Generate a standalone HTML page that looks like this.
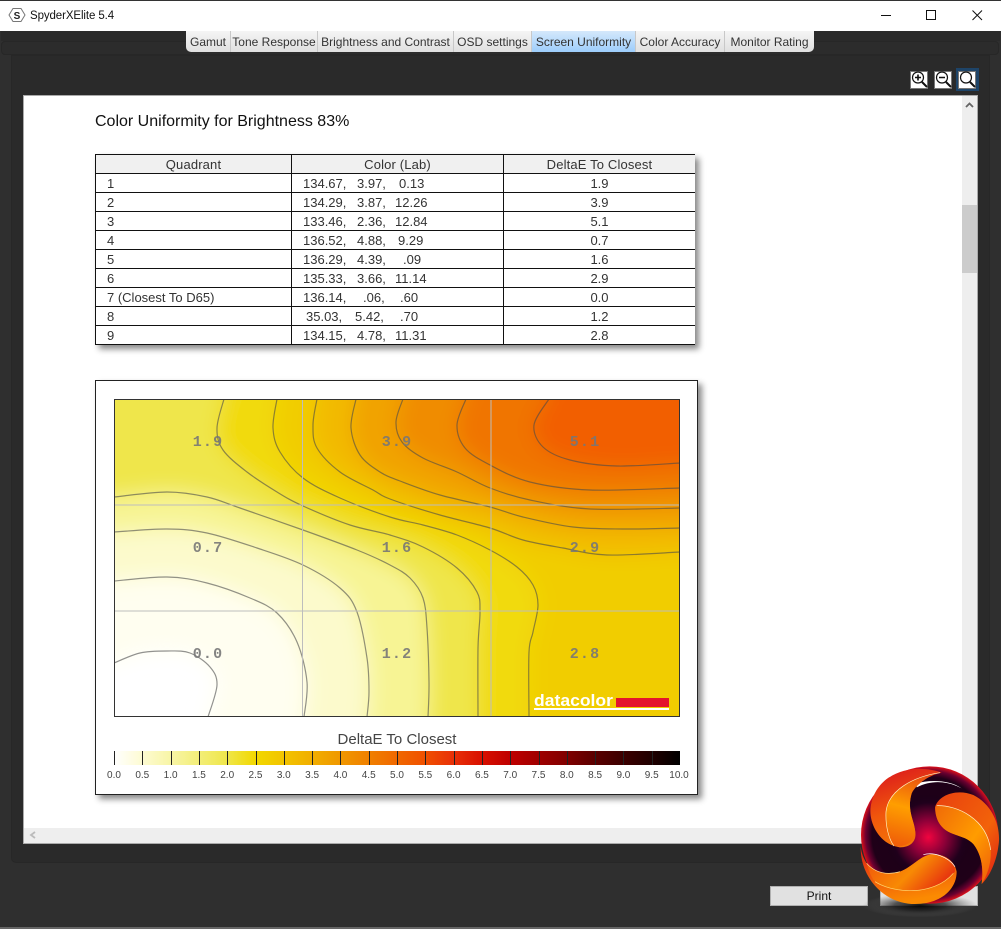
<!DOCTYPE html>
<html><head><meta charset="utf-8"><style>
html,body{margin:0;padding:0;background:#2f2f2f}
#p{position:relative;width:1001px;height:929px;overflow:hidden;background:#2f2f2f;font-family:"Liberation Sans",sans-serif;color:#222}
#p div,#p span{position:absolute;white-space:nowrap}
.tab{top:31px;height:21px;line-height:22px;text-align:center;font-size:12px;color:#333;background:linear-gradient(#f5f5f5,#e0e0e0);border-right:1px solid #c8c8c8;box-sizing:border-box}
.row{left:95px;width:600px;height:19px;border-bottom:1px solid #111;box-sizing:border-box;font-size:13px;line-height:19px;color:#333}
.row span{top:0}
.c{text-align:center}
.h{top:155px;font-size:13px;line-height:19px;color:#333;letter-spacing:.15px}
.btn{top:886px;width:98px;height:20px;background:#e1e1e1;border:1px solid #b0b0b0;box-sizing:border-box;text-align:center;font-size:12px;line-height:19px;color:#111}
</style></head><body><div id="p">
<div style="left:0;top:0;width:1001px;height:31px;background:#fff;border-top:1px solid #333;box-sizing:border-box"></div>
<svg style="position:absolute;left:8px;top:7px" width="18" height="16" viewBox="0 0 18 16"><path d="M5 1.500H13L17 8L13 14.500H5L1 8Z" fill="#fff" stroke="#777" stroke-width="1"/><text x="9" y="12" font-family="Liberation Sans" font-weight="bold" font-size="10" text-anchor="middle" fill="#222">S</text></svg>
<div style="left:30px;top:8px;font-size:11.500px;line-height:16px;color:#111;letter-spacing:-.1px">SpyderXElite 5.4</div>
<svg style="position:absolute;left:870px;top:0" width="125" height="31" viewBox="0 0 125 31"><path d="M11 15.500H21" stroke="#111"/><rect x="56.500" y="10.500" width="9" height="9" fill="none" stroke="#111"/><path d="M102.500 10.500L112 20M112 10.500L102.500 20" stroke="#111" fill="none"/></svg>

<div style="left:1px;top:31px;width:999px;height:10px;background:#2a2a2a"></div>
<div style="left:1px;top:41px;width:998px;height:14px;background:#2c2c2c;border-radius:4px;border:1px solid #272727;box-sizing:border-box"></div>
<div style="left:11px;top:55px;width:979px;height:808px;background:#2a2a2a;border:1px solid #272727;border-radius:0 0 5px 5px;box-sizing:border-box"></div>

<div class="tab" style="left:186px;width:45px;border-radius:0 0 0 5px">Gamut</div>
<div class="tab" style="left:231px;width:87px">Tone Response</div>
<div class="tab" style="left:318px;width:136px">Brightness and Contrast</div>
<div class="tab" style="left:454px;width:78px">OSD settings</div>
<div class="tab" style="left:532px;width:104px;background:linear-gradient(#d4e8fb,#9dcdfb)">Screen Uniformity</div>
<div class="tab" style="left:636px;width:89px">Color Accuracy</div>
<div class="tab" style="left:725px;width:89px;border-radius:0 0 5px 0;border-right:0">Monitor Rating</div>

<div style="left:910px;top:71px;width:18px;height:18px;background:#fff;border:1px solid #777;box-sizing:border-box"></div>
<div style="left:934px;top:71px;width:18px;height:18px;background:#fff;border:1px solid #777;box-sizing:border-box"></div>
<div style="left:956px;top:68px;width:23px;height:23px;background:#1e4468;box-sizing:border-box"></div>
<div style="left:958px;top:71px;width:18px;height:18px;background:#fff;border:1px solid #777;box-sizing:border-box"></div>
<svg style="position:absolute;left:905px;top:62px" width="76" height="34" viewBox="0 0 76 34" fill="none" stroke="#111"><g stroke-width="1.200"><circle cx="13" cy="15.500" r="5.500"/><circle cx="37" cy="15.500" r="5.500"/><circle cx="61" cy="15.500" r="5.500"/></g><path d="M17 20L22 25M41 20L46 25M65 20L70 25" stroke-width="2"/><path d="M10 15.500H16M13 12.500V18.500M34 15.500H40" stroke-width="1.600"/></svg>

<div style="left:23px;top:95px;width:955px;height:749px;background:#fff;border:1px solid #aaa;box-sizing:border-box"></div>
<div style="left:962px;top:96px;width:15px;height:747px;background:#eee"></div>
<div style="left:962px;top:205px;width:15px;height:68px;background:#ccc"></div>
<div style="left:24px;top:828px;width:953px;height:15px;background:#eee"></div>
<svg style="position:absolute;left:0;top:0" width="1001" height="929" viewBox="0 0 1001 929" fill="none"><path d="M966 107L969.500 103.500L973 107" stroke="#666" stroke-width="1.800"/><path d="M35 832L31 835L35 838" stroke="#bbb" stroke-width="1.800"/></svg>

<div style="left:95px;top:112px;font-size:16px;line-height:19px;color:#111">Color Uniformity for Brightness 83%</div>

<div style="left:95px;top:154px;width:600px;height:191px;background:#fff;box-shadow:4px 4px 6px #888"></div>
<div style="left:95px;top:154px;width:600px;height:20px;background:#f0f0f0;border-top:1px solid #111;border-bottom:1px solid #111;box-sizing:border-box"></div>
<div class="c h" style="left:96px;width:195px">Quadrant</div>
<div class="c h" style="left:292px;width:211px">Color (Lab)</div>
<div class="c h" style="left:504px;width:191px">DeltaE To Closest</div>

<div class="row" style="top:174px"><span style="left:12px">1</span><span style="left:208px">134.67,</span><span style="left:262px">3.97,</span><span style="left:304px">0.13</span><span class="c" style="left:409px;width:191px">1.9</span></div>
<div class="row" style="top:193px"><span style="left:12px">2</span><span style="left:208px">134.29,</span><span style="left:262px">3.87,</span><span style="left:300px">12.26</span><span class="c" style="left:409px;width:191px">3.9</span></div>
<div class="row" style="top:212px"><span style="left:12px">3</span><span style="left:208px">133.46,</span><span style="left:262px">2.36,</span><span style="left:300px">12.84</span><span class="c" style="left:409px;width:191px">5.1</span></div>
<div class="row" style="top:231px"><span style="left:12px">4</span><span style="left:208px">136.52,</span><span style="left:262px">4.88,</span><span style="left:303px">9.29</span><span class="c" style="left:409px;width:191px">0.7</span></div>
<div class="row" style="top:250px"><span style="left:12px">5</span><span style="left:208px">136.29,</span><span style="left:262px">4.39,</span><span style="left:308px">.09</span><span class="c" style="left:409px;width:191px">1.6</span></div>
<div class="row" style="top:269px"><span style="left:12px">6</span><span style="left:208px">135.33,</span><span style="left:262px">3.66,</span><span style="left:300px">11.14</span><span class="c" style="left:409px;width:191px">2.9</span></div>
<div class="row" style="top:288px"><span style="left:12px">7 (Closest To D65)</span><span style="left:208px">136.14,</span><span style="left:268px">.06,</span><span style="left:305px">.60</span><span class="c" style="left:409px;width:191px">0.0</span></div>
<div class="row" style="top:307px"><span style="left:12px">8</span><span style="left:211px">35.03,</span><span style="left:260px">5.42,</span><span style="left:305px">.70</span><span class="c" style="left:409px;width:191px">1.2</span></div>
<div class="row" style="top:326px"><span style="left:12px">9</span><span style="left:208px">134.15,</span><span style="left:262px">4.78,</span><span style="left:300px">11.31</span><span class="c" style="left:409px;width:191px">2.8</span></div>
<div style="left:95px;top:154px;width:1px;height:191px;background:#111"></div>
<div style="left:291px;top:154px;width:1px;height:191px;background:#111"></div>
<div style="left:503px;top:154px;width:1px;height:191px;background:#111"></div>

<div style="left:95px;top:380px;width:603px;height:415px;background:#fff;border:1px solid #222;box-sizing:border-box;box-shadow:4px 4px 6px #888"></div>

<svg id="chart" style="position:absolute;left:0;top:0" width="1001" height="929" viewBox="0 0 1001 929">
<defs>
<clipPath id="cp"><rect x="114" y="399" width="566" height="318"/></clipPath>
<filter id="bl" filterUnits="userSpaceOnUse" x="-100" y="200" width="1200" height="800"><feGaussianBlur stdDeviation="10"/></filter>
<linearGradient id="cb" x1="0" x2="1" y1="0" y2="0">
<stop offset="0" stop-color="#fff"/><stop offset=".05" stop-color="#fdfbd2"/><stop offset=".1" stop-color="#f8f5a6"/><stop offset=".15" stop-color="#f3ee78"/><stop offset=".2" stop-color="#efe64a"/><stop offset=".25" stop-color="#f2d800"/><stop offset=".3" stop-color="#f2c400"/><stop offset=".35" stop-color="#f1ae00"/><stop offset=".4" stop-color="#f09800"/><stop offset=".45" stop-color="#f08000"/><stop offset=".5" stop-color="#f06800"/><stop offset=".55" stop-color="#f05000"/><stop offset=".6" stop-color="#e83008"/><stop offset=".65" stop-color="#d81000"/><stop offset=".7" stop-color="#bf0000"/><stop offset=".75" stop-color="#a00000"/><stop offset=".8" stop-color="#800000"/><stop offset=".85" stop-color="#5a0000"/><stop offset=".9" stop-color="#3c0000"/><stop offset=".95" stop-color="#200000"/><stop offset="1" stop-color="#000"/>
</linearGradient>
</defs>
<g clip-path="url(#cp)"><rect x="114" y="399" width="566" height="318" fill="#fff"/><g id="fills" filter="url(#bl)"></g><g id="lines" fill="none" stroke="#4a4a4a" stroke-opacity=".6" stroke-width="1.200"></g></g>
<path d="M302.500 399V717M491 399V717M114 505H680M114 611H680" stroke="#bdbdbd" stroke-width="1"/>
<rect x="114.500" y="399.500" width="565" height="317" fill="none" stroke="#333" stroke-width="1"/>
<g font-family="Liberation Mono" font-weight="bold" font-size="15" fill="#777" text-anchor="middle" letter-spacing="1.200" fill-opacity=".9">
<text x="208" y="446">1.9</text><text x="397" y="446">3.9</text><text x="585" y="446">5.1</text>
<text x="208" y="552">0.7</text><text x="397" y="552">1.6</text><text x="585" y="552">2.9</text>
<text x="208" y="658">0.0</text><text x="397" y="658">1.2</text><text x="585" y="658">2.8</text>
</g>
<text x="534" y="706" font-family="Liberation Sans" font-weight="bold" font-size="17" fill="#fff" textLength="79" lengthAdjust="spacingAndGlyphs">datacolor</text>
<rect x="616" y="698" width="53" height="9" fill="#e4132c"/><rect x="534" y="708" width="135" height="2" fill="#fff"/>
<text x="397" y="744" font-family="Liberation Sans" font-size="15" fill="#444" text-anchor="middle">DeltaE To Closest</text>
<rect x="114" y="751" width="566" height="14" fill="url(#cb)"/>
<g id="ticks" stroke="#222" stroke-width="1"></g>
<g id="tl" font-family="Liberation Sans" font-size="10" fill="#444" text-anchor="middle"></g>
</svg>

<div class="btn" style="left:770px">Print</div>
<div class="btn" style="left:880px">Close</div>
<div style="left:0;top:927px;width:1001px;height:2px;background:#666"></div>

<svg style="position:absolute;left:760px;top:750px" width="241" height="179" viewBox="0 0 723 537">
<defs>
<radialGradient id="sh"><stop offset="0" stop-color="#000" stop-opacity=".9"/><stop offset=".45" stop-color="#222" stop-opacity=".75"/><stop offset="1" stop-color="#666" stop-opacity="0"/></radialGradient>
<radialGradient id="base"><stop offset="0" stop-color="#1a0018"/><stop offset=".84" stop-color="#1f0018"/><stop offset=".93" stop-color="#6a0030"/><stop offset="1" stop-color="#dc101a"/></radialGradient>
<radialGradient id="core" gradientUnits="userSpaceOnUse" cx="505" cy="262" r="130"><stop offset="0" stop-color="#f0043f"/><stop offset=".4" stop-color="#8c0038"/><stop offset=".8" stop-color="#20001c"/><stop offset="1" stop-color="#1a0018" stop-opacity="0"/></radialGradient>
<linearGradient id="b1" x1=".3" y1="0" x2=".6" y2="1"><stop offset="0" stop-color="#dc1c1c"/><stop offset=".5" stop-color="#f0560c"/><stop offset="1" stop-color="#f47a08"/></linearGradient>
<linearGradient id="i1" x1=".6" y1="0" x2=".4" y2="1"><stop offset="0" stop-color="#e64a12"/><stop offset=".5" stop-color="#ff9e00"/><stop offset="1" stop-color="#f06008"/></linearGradient>
<linearGradient id="b2" x1="0" y1="0" x2="1" y2="1"><stop offset="0" stop-color="#e8400f"/><stop offset=".6" stop-color="#f2620a"/><stop offset="1" stop-color="#dc1c14"/></linearGradient>
<linearGradient id="i2" x1="0" y1="0" x2="1" y2="1"><stop offset="0" stop-color="#f06a08"/><stop offset=".55" stop-color="#ff9c00"/><stop offset="1" stop-color="#ee5a0a"/></linearGradient>
<linearGradient id="b3" x1="0" y1="0" x2=".3" y2="1"><stop offset="0" stop-color="#dc1c14"/><stop offset=".6" stop-color="#f0600a"/><stop offset="1" stop-color="#fb8a02"/></linearGradient>
<linearGradient id="i3" x1="0" y1="0" x2="1" y2=".4"><stop offset="0" stop-color="#f0500c"/><stop offset=".6" stop-color="#f88a04"/><stop offset="1" stop-color="#e8380e"/></linearGradient>
</defs>
<ellipse cx="480" cy="466" rx="172" ry="36" fill="url(#sh)"/>
<circle cx="509" cy="255" r="206" fill="url(#base)"/>
<circle cx="505" cy="262" r="130" fill="url(#core)"/>
<path d="M470 100C510 88 570 90 605 115L590 108C550 92 510 92 470 112Z" fill="#fff"/>
<path d="M545 68C470 40 350 60 332 170C325 220 360 285 420 292C455 292 472 270 465 240C462 210 440 180 455 130C470 100 510 75 545 68Z" fill="url(#b1)"/>
<path d="M540 68C460 80 385 120 378 185C376 225 385 265 402 288C440 294 470 270 465 240C462 210 440 180 455 130C470 100 510 75 540 68Z" fill="url(#i1)"/>
<path d="M540 68C460 80 385 120 378 185C376 225 385 265 402 288" fill="none" stroke="#fff2c0" stroke-width="2"/>
<path d="M525 172C535 135 590 115 640 135C700 165 725 235 715 290C710 330 690 380 665 402C672 350 662 310 640 282C610 250 560 262 535 215C528 200 525 185 525 172Z" fill="url(#b2)"/>
<path d="M527 168C590 165 680 205 692 300C695 340 680 380 665 402C672 350 662 310 640 282C610 250 560 262 535 215C528 200 525 185 527 168Z" fill="url(#i2)"/>
<path d="M530 167C590 165 680 205 692 300" fill="none" stroke="#fff2c0" stroke-width="2"/>
<path d="M302 290C300 380 370 462 465 462C540 462 590 420 590 365C585 335 560 315 520 312C480 315 460 350 420 365C380 378 340 365 320 340C310 325 305 310 302 290Z" fill="url(#b3)"/>
<path d="M345 395C400 430 520 440 585 365C585 335 560 315 520 312C480 315 460 350 420 365C380 378 340 365 320 340C325 360 335 385 345 395Z" fill="url(#i3)"/>
<path d="M345 395C400 430 520 440 580 370" fill="none" stroke="#ffd870" stroke-width="2"/>
<path d="M490 314C520 305 565 320 585 350" fill="none" stroke="#fff" stroke-width="2"/>
<path d="M320 340C345 368 380 376 420 365" fill="none" stroke="#ffe9a0" stroke-width="2"/>
</svg>
</div>
<script>
var C=[
[.1,"#fffef0",[[114,663],[140,653],[167,651],[190,653],[210,667],[217,685],[208,717]],"L208 850L850 850L850 250L0 250L0 663"],
[.5,"#fcfacc",[[114,581],[167,577],[207,583],[250,598],[277,613],[297,642],[307,682],[304,717]],"L304 850L850 850L850 250L0 250L0 581"],
[1,"#f7f494",[[114,532],[167,529],[207,533],[257,548],[303,565],[340,588],[357,612],[367,658],[369,692],[367,717]],"L367 850L850 850L850 250L0 250L0 532"],
[1.5,"#efe64c",[[114,497],[167,492],[207,497],[240,508],[303,530],[357,550],[390,565],[410,578],[423,598],[427,628],[429,682],[428,717]],"L428 850L850 850L850 250L0 250L0 497"],
[2,"#f1da10",[[224,399],[217,428],[223,450],[247,472],[277,492],[303,506],[350,525],[390,535],[423,547],[457,568],[477,592],[480,612],[478,648],[478,717]],"L478 850L850 850L850 250L224 250"],
[2.500,"#f1cd00",[[277,399],[273,428],[280,452],[303,478],[340,498],[390,517],[423,525],[457,535],[490,550],[517,567],[533,585],[538,605],[533,632],[529,652],[529,717]],"L529 850L850 850L850 250L277 250"],
[3,"#f2ba00",[[317,399],[313,425],[317,448],[340,472],[373,490],[390,499],[440,515],[490,528],[523,540],[563,548],[607,555],[680,552]],"L850 552L850 250L317 250"],
[3.500,"#f1a300",[[356,399],[351,428],[360,455],[380,472],[400,481],[440,495],[490,507],[523,517],[573,527],[623,529],[680,528]],"L850 528L850 250L356 250"],
[4,"#f08c00",[[403,399],[396,422],[402,442],[423,458],[457,472],[490,488],[530,500],[590,509],[680,508]],"L850 508L850 250L403 250"],
[4.500,"#f07400",[[466,399],[457,425],[465,448],[490,465],[530,482],[590,490],[680,488]],"L850 488L850 250L466 250"],
[5,"#f25e00",[[549,399],[534,425],[543,447],[570,460],[617,466],[680,463]],"L850 463L850 250L549 250"]
];
function P(p){var d="M"+p[0][0]+" "+p[0][1];for(var i=0;i<p.length-1;i++){var a=p[i>0?i-1:0],b=p[i],c=p[i+1],e=p[i+2<p.length?i+2:i+1];d+="C"+(b[0]+(c[0]-a[0])/6).toFixed(1)+" "+(b[1]+(c[1]-a[1])/6).toFixed(1)+" "+(c[0]-(e[0]-b[0])/6).toFixed(1)+" "+(c[1]-(e[1]-b[1])/6).toFixed(1)+" "+c[0]+" "+c[1];}return d;}
var NS="http://www.w3.org/2000/svg",F=document.getElementById("fills"),L=document.getElementById("lines");
C.forEach(function(c){var d=P(c[2]);var f=document.createElementNS(NS,"path");f.setAttribute("d",d+c[3]+"Z");f.setAttribute("fill",c[1]);F.appendChild(f);var l=document.createElementNS(NS,"path");l.setAttribute("d",d);L.appendChild(l);});
var T=document.getElementById("ticks"),X=document.getElementById("tl");
for(var i=0;i<=20;i++){var x=114+i*28.3;if(i<20){var t=document.createElementNS(NS,"path");t.setAttribute("d","M"+(Math.round(x)+.5)+" 751V765");T.appendChild(t);}
var s=document.createElementNS(NS,"text");s.setAttribute("x",i==20?679:x);s.setAttribute("y",778);s.textContent=(i/2).toFixed(1);X.appendChild(s);}
</script>
</body></html>
